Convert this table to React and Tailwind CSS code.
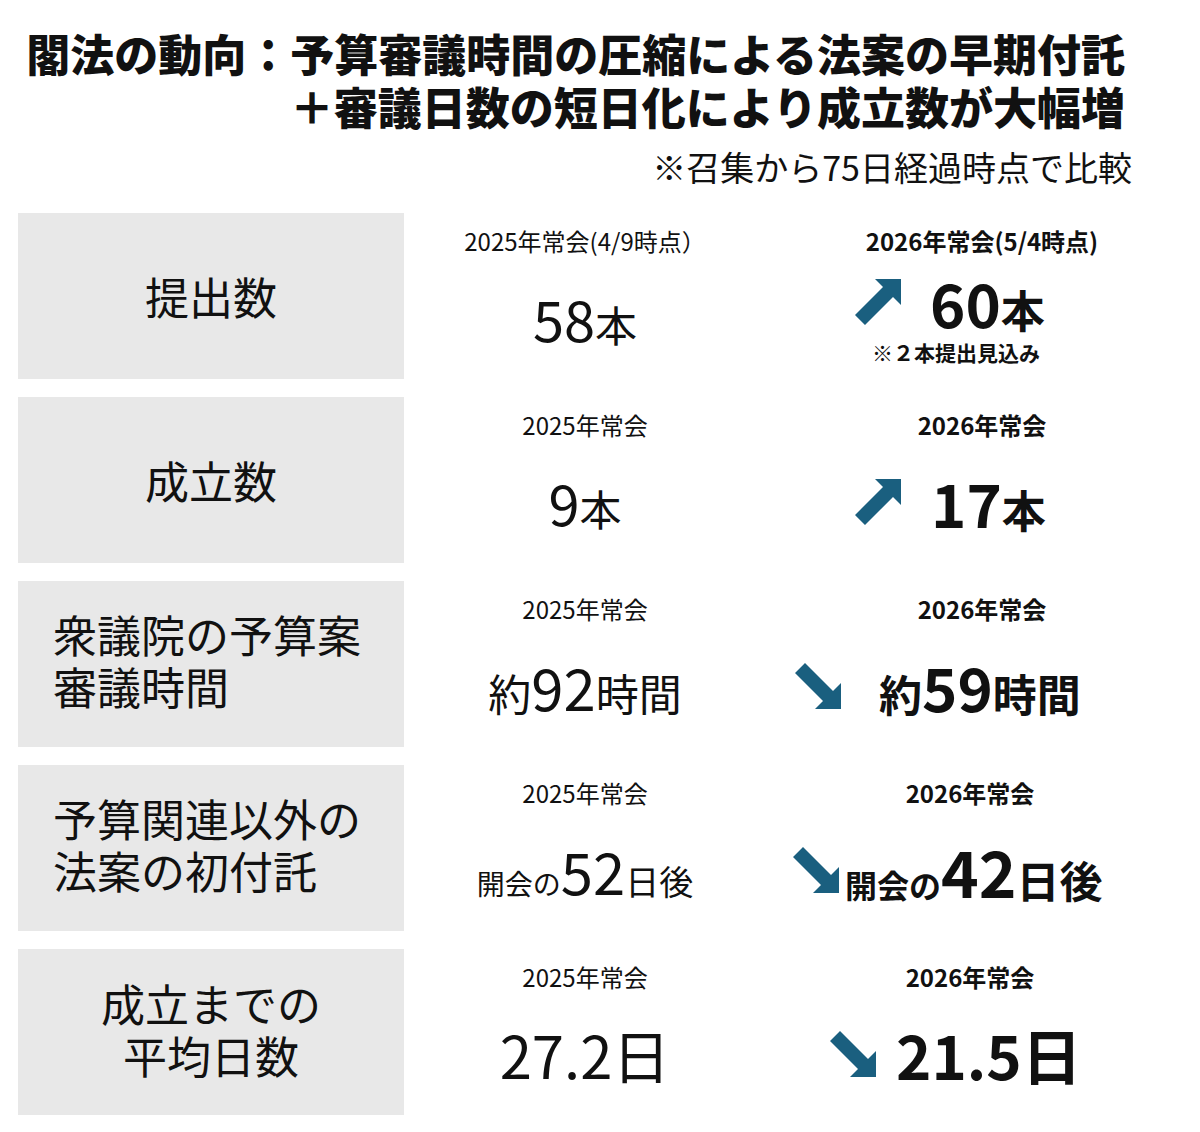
import React from 'react';

const FONT = "font-['Noto_Sans_CJK_JP',sans-serif]";

// 46x46 arrows, pointing up-right or down-right
const Arrow = ({ up }) => (
  <svg width="46" height="46" viewBox="0 0 46 46" className="shrink-0">
    {up ? (
      <polygon points="46,0 46,26 38,18 10,46 0,36 28,8 20,0" fill="#1a5f7f" />
    ) : (
      <polygon points="46,46 46,20 38,28 10,0 0,10 28,38 20,46" fill="#1a5f7f" />
    )}
  </svg>
);

const rows = [
  {
    label: ['提出数'],
    labelCls: 'items-center text-center',
    h25: '2025年常会(4/9時点）',
    h26: '2026年常会(5/4時点)',
    h26Cls: 'pl-[16px]',
    mid: (
      <>
        <span className="text-[56px]">58</span>
        <span className="text-[42px]">本</span>
      </>
    ),
    up: true,
    rightCls: 'pl-[89px] gap-[29px]',
    right: (
      <>
        <span className="text-[60px]">60</span>
        <span className="text-[44px]">本</span>
      </>
    ),
    note: '※２本提出見込み',
  },
  {
    label: ['成立数'],
    labelCls: 'items-center text-center',
    h25: '2025年常会',
    h26: '2026年常会',
    h26Cls: 'pl-[16px]',
    mid: (
      <>
        <span className="text-[56px]">9</span>
        <span className="text-[42px]">本</span>
      </>
    ),
    up: true,
    rightCls: 'pl-[89px] gap-[30px]',
    right: (
      <>
        <span className="text-[60px]">17</span>
        <span className="text-[44px]">本</span>
      </>
    ),
  },
  {
    label: ['衆議院の予算案', '審議時間'],
    labelCls: 'items-start pl-[35px] pb-[8px]',
    h25: '2025年常会',
    h26: '2026年常会',
    h26Cls: 'pl-[16px]',
    mid: (
      <>
        <span className="text-[43px]">約</span>
        <span className="text-[58px]">92</span>
        <span className="text-[43px]">時間</span>
      </>
    ),
    up: false,
    rightCls: 'pl-[29px] gap-[38px]',
    right: (
      <>
        <span className="text-[43px]">約</span>
        <span className="text-[60px]">59</span>
        <span className="text-[44px]">時間</span>
      </>
    ),
  },
  {
    label: ['予算関連以外の', '法案の初付託'],
    labelCls: 'items-start pl-[35px] pb-[8px]',
    h25: '2025年常会',
    h26: '2026年常会',
    h26Cls: 'pr-[8px]',
    mid: (
      <>
        <span className="text-[28px]">開会の</span>
        <span className="text-[58px]">52</span>
        <span className="text-[34px]">日後</span>
      </>
    ),
    up: false,
    rightCls: 'pl-[27px] gap-[6px]',
    right: (
      <>
        <span className="text-[32px]">開会の</span>
        <span className="text-[64px]">42</span>
        <span className="text-[43px]">日後</span>
      </>
    ),
  },
  {
    label: ['成立までの', '平均日数'],
    labelCls: 'items-center text-center pb-[6px]',
    h25: '2025年常会',
    h26: '2026年常会',
    h26Cls: 'pr-[8px]',
    mid: <span className="text-[58px]">27.2日</span>,
    up: false,
    rightCls: 'pl-[64px] gap-[20px]',
    right: <span className="text-[60px]">21.5日</span>,
  },
];

export default function App() {
  return (
    <div className={`w-[1200px] min-h-[1132px] bg-white text-[#111] ${FONT}`}>
      {/* title */}
      <div className="pt-[27px] pr-[75px] text-right text-[44px] leading-[53px] font-black">
        <div>閣法の動向：予算審議時間の圧縮による法案の早期付託</div>
        <div>＋審議日数の短日化により成立数が大幅増</div>
      </div>
      <div className="mt-[14px] pr-[68px] text-right text-[34px] leading-[40px]">
        ※召集から75日経過時点で比較
      </div>

      {/* table */}
      <div className="mt-[26px] px-[18px] flex flex-col gap-[18px]">
        {rows.map((r, i) => (
          <div key={i} className="grid grid-cols-[386px_362px_1fr] h-[166px]">
            <div className={`bg-[#e8e8e8] flex flex-col justify-center text-[44px] leading-[52px] ${r.labelCls}`}>
              {r.label.map((l) => (
                <div key={l}>{l}</div>
              ))}
            </div>

            <div className="flex flex-col items-center">
              <div className="pt-[14px] text-[24px] leading-[28px]">{r.h25}</div>
              <div className="flex-1 pt-[2px] flex items-center justify-center">
                <div className="flex items-baseline leading-none">{r.mid}</div>
              </div>
            </div>

            <div className="flex flex-col">
              <div className={`pt-[14px] text-center text-[24px] leading-[28px] font-bold ${r.h26Cls}`}>{r.h26}</div>
              <div className="flex-1 pt-[2px] flex flex-col justify-center">
                <div className={`flex items-center ${r.rightCls}`}>
                  <Arrow up={r.up} />
                  <div className="flex items-baseline leading-none font-bold">{r.right}</div>
                </div>
                {r.note && (
                  <div className="mt-[8px] pl-[106px] text-[21px] leading-[24px] font-bold">{r.note}</div>
                )}
              </div>
            </div>
          </div>
        ))}
      </div>
    </div>
  );
}
